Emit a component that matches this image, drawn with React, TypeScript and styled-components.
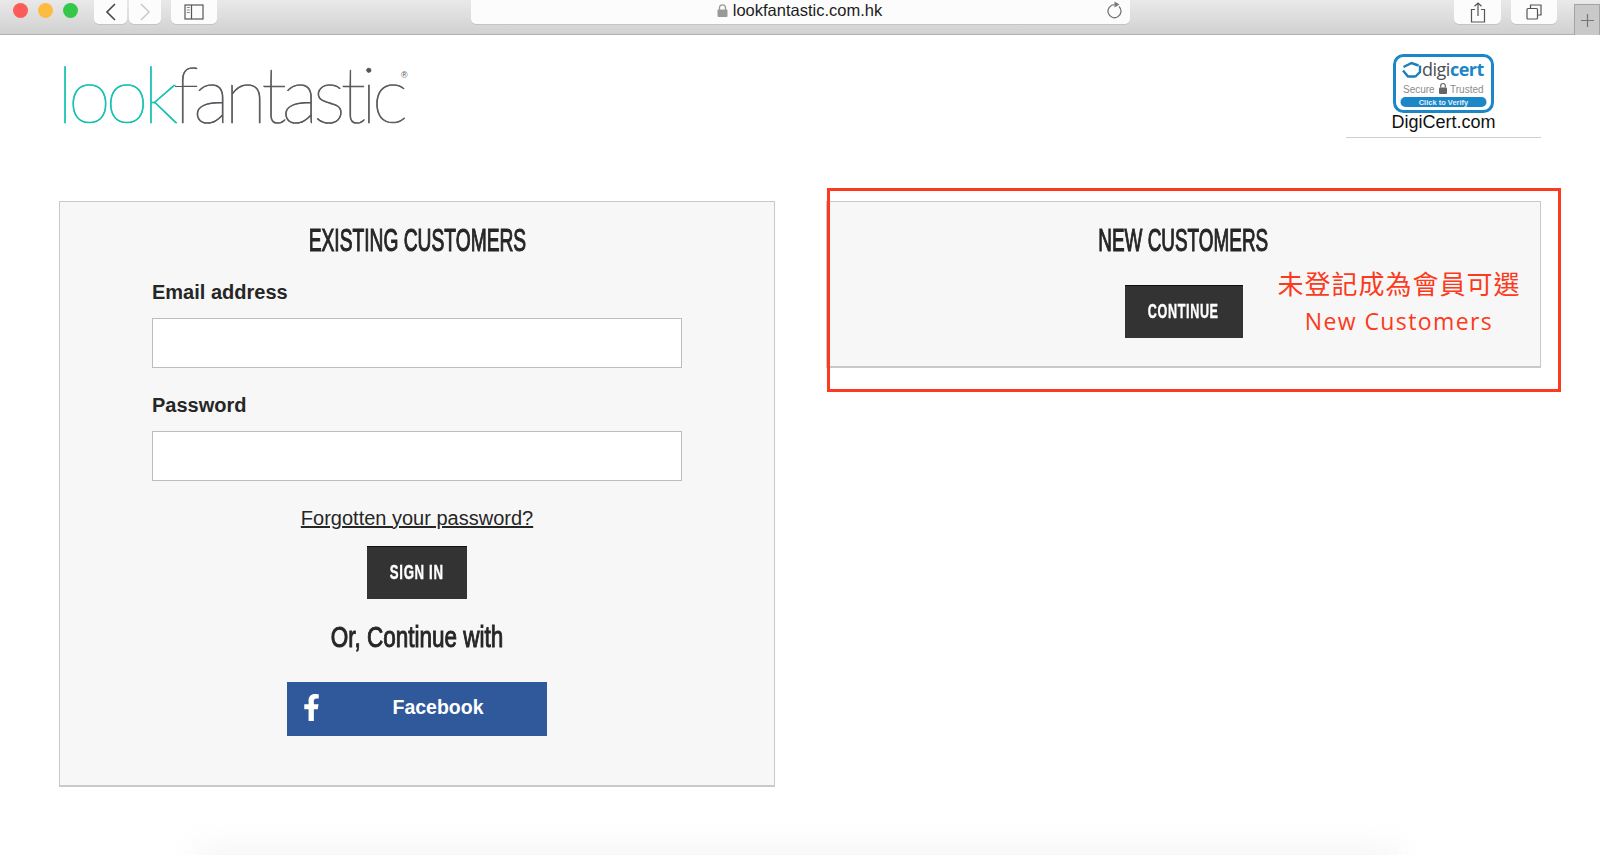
import React, { FC } from "react";
import styled, { createGlobalStyle } from "styled-components";
import { FaFacebookF } from "react-icons/fa";

const GlobalStyle = createGlobalStyle`
    html, body {
        margin: 0;
        height: 100%;
        overflow: hidden;
        background: #fff;
        font-family: "Liberation Sans", Arial, sans-serif;
        color: #222;
    }
    * { box-sizing: border-box; }
`;

const Page = styled.div`
    position: relative;
    width: 1600px;
    height: 855px;
    overflow: hidden;
    display: flex;
    flex-direction: column;
`;

/* browser chrome */
const Toolbar = styled.header`
    height: 35px;
    flex: none;
    display: flex;
    align-items: flex-start;
    background: linear-gradient(#e9e9e9, #d1d1d1);
    border-bottom: 1px solid #b0b0b0;
`;

const Lights = styled.div`
    display: flex;
    gap: 10px;
    padding: 3px 0 0 13px;
    width: 94px;
`;

const Light = styled.span<{ $color: string }>`
    width: 15px;
    height: 15px;
    border-radius: 50%;
    background: ${({ $color }) => $color};
`;

const ChromeButton = styled.div<{ $width: number; $gap?: number }>`
    width: ${({ $width }) => $width}px;
    height: 24px;
    margin-right: ${({ $gap }) => $gap ?? 0}px;
    flex: none;
    display: flex;
    align-items: center;
    justify-content: center;
    background: #fcfcfc;
    border-radius: 0 0 5px 5px;
    box-shadow: 0 1px 0 #c4c4c4;
`;

const UrlBar = styled.div`
    width: 659px;
    height: 24px;
    flex: none;
    margin: 0 324px 0 254px;
    position: relative;
    display: flex;
    align-items: center;
    justify-content: center;
    gap: 5px;
    padding: 0 2px 3px 0;
    font-size: 16.5px;
    color: #1c1c1c;
    background: #fcfcfc;
    border-radius: 0 0 5px 5px;
    box-shadow: 0 1px 0 #c4c4c4;
`;

const Reload = styled.span`
    position: absolute;
    right: 7px;
    top: 0;
    display: flex;
`;

const NewTab = styled.div`
    width: 26px;
    height: 31px;
    margin: 4px 0 0 17px;
    flex: none;
    display: flex;
    align-items: center;
    justify-content: center;
    background: #c9c9c9;
    border: 1px solid #a4a4a4;
    border-bottom: none;
`;

/* site header */
const SiteHeader = styled.div`
    height: 166px;
    flex: none;
    display: flex;
    justify-content: space-between;
    padding: 0 59px 0 57px;
`;

const Logo = styled.div`
    position: relative;
    height: 105px;
    width: 356px;
    padding-top: 14px;
    font-family: Lato, sans-serif;
    font-weight: 100;
    font-size: 78px;
    line-height: 88px;
    letter-spacing: -5.3px;
    color: #55565a;
    -webkit-text-stroke: 0.7px #55565a;
    white-space: nowrap;
`;

const LogoTeal = styled.span`
    color: #12bfae;
    -webkit-text-stroke: 0.7px #12bfae;
`;

const LogoMark = styled.span`
    position: absolute;
    left: 344px;
    top: 35px;
    font-family: "Liberation Sans", sans-serif;
    font-weight: 400;
    font-size: 9px;
    line-height: 10px;
    letter-spacing: 0;
    -webkit-text-stroke: 0;
`;

const Seal = styled.div`
    width: 195px;
    height: 103px;
    padding-top: 19px;
    display: flex;
    flex-direction: column;
    align-items: center;
    border-bottom: 1px solid #cfcfcf;
`;

const SealCaption = styled.div`
    font-size: 18px;
    line-height: 20px;
    margin-top: -1px;
    color: #111;
`;

/* panels */
const Columns = styled.main`
    display: grid;
    grid-template-columns: 716px 715px;
    column-gap: 51px;
    align-items: start;
    padding-left: 59px;
`;

const Panel = styled.section<{ $height: number }>`
    height: ${({ $height }) => $height}px;
    display: flex;
    flex-direction: column;
    align-items: center;
    background: #f7f7f7;
    border: 1px solid #c9c9c9;
    border-bottom-width: 2px;
`;

/* no condensed face is installed, so the Oswald-like text gets squeezed */
const Squeezed = styled.span<{ $x: number }>`
    display: inline-block;
    white-space: nowrap;
    transform: scaleX(${({ $x }) => $x});
`;

const Title = styled.h2`
    margin: 21px 0 0;
    height: 36px;
    font-size: 31px;
    line-height: 36px;
    font-weight: 400;
    color: #262626;
    -webkit-text-stroke: 1.1px #262626;
`;

const Form = styled.form`
    width: 530px;
    margin-top: 21px;
    display: flex;
    flex-direction: column;
    align-items: center;
`;

const Label = styled.label`
    align-self: flex-start;
    font-size: 20px;
    line-height: 24px;
    font-weight: 700;
    color: #262626;
`;

const Input = styled.input`
    width: 100%;
    height: 50px;
    margin: 14px 0 25px;
    background: #fff;
    border: 1px solid #bdbdbd;
`;

const Forgotten = styled.a`
    font-size: 20px;
    line-height: 24px;
    color: #262626;
    text-decoration: underline;
`;

const DarkButton = styled.button<{ $width: number }>`
    width: ${({ $width }) => $width}px;
    height: 53px;
    padding: 0 0 2px;
    display: flex;
    align-items: center;
    justify-content: center;
    background: #333;
    border: none;
    border-top: 1px solid #111;
    color: #fff;
    font-family: "Liberation Sans", sans-serif;
    font-weight: 700;
    font-size: 20px;
    letter-spacing: 1px;
    -webkit-text-stroke: 0.4px #fff;
`;

const SignIn = styled(DarkButton)`
    margin-top: 16px;
`;

const Continue = styled(DarkButton)`
    margin-top: 26px;
`;

const OrContinue = styled.div`
    margin-top: 19px;
    font-size: 30px;
    line-height: 38px;
    color: #262626;
    -webkit-text-stroke: 1px #262626;
`;

const FacebookButton = styled.a`
    position: relative;
    width: 260px;
    height: 54px;
    margin-top: 26px;
    display: flex;
    align-items: center;
    justify-content: center;
    padding: 0 0 3px 42px;
    background: #30599c;
    color: #fff;
    font-size: 19.5px;
    font-weight: 700;
`;

const FacebookIcon = styled.span`
    position: absolute;
    left: 11px;
    top: 12px;
    font-size: 27px;
    line-height: 0;
`;

/* annotation drawn over the screenshot */
const RedFrame = styled.div`
    position: absolute;
    left: 827px;
    top: 188px;
    width: 734px;
    height: 204px;
    border: 3px solid #fb3a20;
`;

const Note = styled.div`
    position: absolute;
    left: 1267px;
    top: 264px;
    width: 264px;
    text-align: center;
    color: #fb3a20;
    white-space: nowrap;
`;

const NoteChinese = styled.div`
    font-family: "Noto Sans CJK TC", sans-serif;
    font-weight: 400;
    font-size: 26px;
    line-height: 38px;
    letter-spacing: 1px;
`;

const NoteLatin = styled.div`
    margin-top: 2px;
    font-family: "Open Sans", sans-serif;
    font-size: 23px;
    line-height: 34px;
    letter-spacing: 1.4px;
`;

const FooterGlow = styled.div`
    position: absolute;
    left: 194px;
    bottom: -30px;
    width: 1206px;
    height: 40px;
    background: #f6f6f6;
    filter: blur(14px);
`;

const BackIcon: FC<{ color: string; flip?: boolean }> = ({ color, flip }) => (
    <svg width="12" height="18" viewBox="0 0 12 18" style={flip ? { transform: "scaleX(-1)" } : undefined}>
        <path d="M10 1 2 9l8 8" fill="none" stroke={color} strokeWidth="1.6" />
    </svg>
);

const SidebarIcon = () => (
    <svg width="20" height="16" viewBox="0 0 20 16">
        <rect x="1" y="1" width="18" height="14" fill="none" stroke="#555" strokeWidth="1.2" />
        <path d="M7.5 1v14" stroke="#555" strokeWidth="1.2" />
        <path d="M2.8 3.5h3M2.8 6h3M2.8 8.5h3" stroke="#888" strokeWidth="1" />
    </svg>
);

const ShareIcon = () => (
    <svg width="16" height="21" viewBox="0 0 16 21">
        <path d="M5 7.5H1.5v12.5h13V7.5H11M8 14V1M4.5 4.3 8 1l3.500 3.300" fill="none" stroke="#555" strokeWidth="1.200" />
    </svg>
);

const TabsIcon = () => (
    <svg width="16" height="16" viewBox="0 0 16 16">
        <path d="M4.500 4V1h10.500v10h-3.500" fill="none" stroke="#555" strokeWidth="1.200" />
        <rect x="1" y="4.500" width="10.500" height="10.500" rx="1" fill="none" stroke="#555" strokeWidth="1.200" />
    </svg>
);

const LockIcon = () => (
    <svg width="11" height="13" viewBox="0 0 11 13">
        <path d="M2.500 6V3.800a3 3 0 0 1 6 0V6" fill="none" stroke="#999" strokeWidth="1.300" />
        <rect x="0.500" y="5.500" width="10" height="7.500" rx="1" fill="#999" />
    </svg>
);

const ReloadIcon = () => (
    <svg width="16" height="19" viewBox="0 0 16 19">
        <path d="M12 6.500a6.500 6.500 0 1 1-4.500-1.800" fill="none" stroke="#777" strokeWidth="1.300" />
        <path d="M7.500 1.500l5 3-5 3z" fill="#777" />
    </svg>
);

const PlusIcon = () => (
    <svg width="15" height="15" viewBox="0 0 15 15">
        <path d="M7.500 1v13M1 7.500h13" stroke="#777" strokeWidth="1.200" />
    </svg>
);

const DigiCertBadge = () => (
    <svg width="101" height="59" viewBox="0 0 101 59">
        <rect x="1.500" y="1.500" width="98" height="56" rx="9" fill="#fff" stroke="#1b86c8" strokeWidth="3" />
        <path d="M10.500 13l8-4 7 2.500M27 11.500l0 6.500-5 5M22 22.500l-7 0-5-6" fill="none" stroke="#1b7db9" strokeWidth="2.400" />
        <text x="29" y="22" fontFamily="Open Sans, sans-serif" fontSize="18" letterSpacing="-0.500" fill="#4b4f54">
            digi<tspan fill="#1b86c8" fontWeight="700">cert</tspan>
        </text>
        <text x="10" y="39" fontFamily="Liberation Sans, sans-serif" fontSize="10" fill="#8c8c8c">Secure</text>
        <rect x="46" y="33.500" width="8" height="6.500" rx="1" fill="#666" />
        <path d="M47.700 33.500v-1.700a2.300 2.300 0 0 1 4.600 0v1.700" fill="none" stroke="#666" strokeWidth="1.200" />
        <text x="57" y="39" fontFamily="Liberation Sans, sans-serif" fontSize="10" fill="#8c8c8c">Trusted</text>
        <rect x="7.500" y="43" width="86" height="10" rx="5" fill="#1b86c8" />
        <text x="50.500" y="51" textAnchor="middle" fontFamily="Liberation Sans, sans-serif" fontSize="7.500" fontWeight="700" fill="#e6f3fb">Click to Verify</text>
    </svg>
);

const App: FC = () => (
    <Page>
        <GlobalStyle />
        <Toolbar>
            <Lights>
                <Light $color="#fc5c57" />
                <Light $color="#fdbc40" />
                <Light $color="#34c84a" />
            </Lights>
            <ChromeButton $width={33} $gap={2}><BackIcon color="#444" /></ChromeButton>
            <ChromeButton $width={32} $gap={10}><BackIcon color="#ccc" flip /></ChromeButton>
            <ChromeButton $width={46}><SidebarIcon /></ChromeButton>
            <UrlBar>
                <LockIcon />
                lookfantastic.com.hk
                <Reload><ReloadIcon /></Reload>
            </UrlBar>
            <ChromeButton $width={47} $gap={10}><ShareIcon /></ChromeButton>
            <ChromeButton $width={46}><TabsIcon /></ChromeButton>
            <NewTab><PlusIcon /></NewTab>
        </Toolbar>

        <SiteHeader>
            <Logo>
                <LogoTeal>look</LogoTeal>fantastic
                <LogoMark>®</LogoMark>
            </Logo>
            <Seal>
                <DigiCertBadge />
                <SealCaption>DigiCert.com</SealCaption>
            </Seal>
        </SiteHeader>

        <Columns>
            <Panel $height={586}>
                <Title><Squeezed $x={0.62}>EXISTING CUSTOMERS</Squeezed></Title>
                <Form>
                    <Label>Email address</Label>
                    <Input type="text" />
                    <Label>Password</Label>
                    <Input type="password" />
                    <Forgotten>Forgotten your password?</Forgotten>
                    <SignIn type="button" $width={100}><Squeezed $x={0.66}>SIGN IN</Squeezed></SignIn>
                    <OrContinue><Squeezed $x={0.75}>Or, Continue with</Squeezed></OrContinue>
                    <FacebookButton>
                        <FacebookIcon><FaFacebookF /></FacebookIcon>
                        Facebook
                    </FacebookButton>
                </Form>
            </Panel>
            <Panel $height={167}>
                <Title><Squeezed $x={0.61}>NEW CUSTOMERS</Squeezed></Title>
                <Continue type="button" $width={118}><Squeezed $x={0.63}>CONTINUE</Squeezed></Continue>
            </Panel>
        </Columns>

        <RedFrame />
        <Note>
            <NoteChinese>未登記成為會員可選</NoteChinese>
            <NoteLatin>New Customers</NoteLatin>
        </Note>
        <FooterGlow />
    </Page>
);

export default App;
